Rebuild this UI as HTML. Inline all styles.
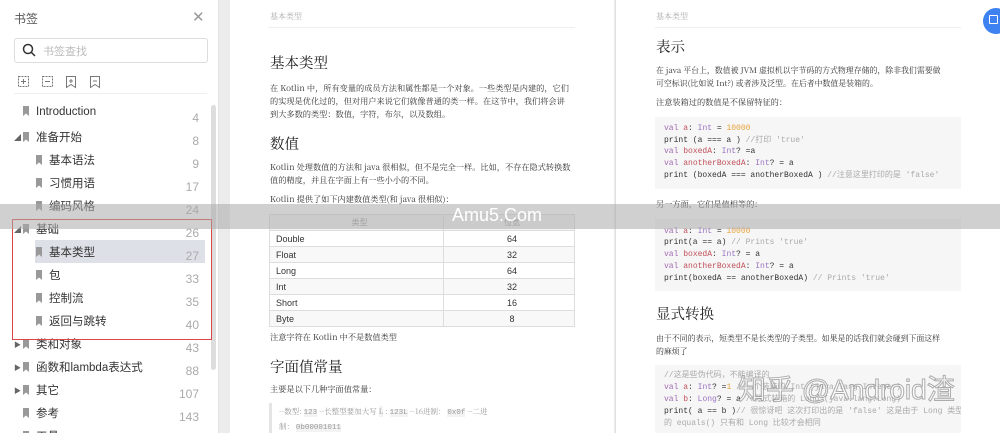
<!DOCTYPE html>
<html style="overflow:hidden"><head><meta charset="utf-8"><style>
*{margin:0;padding:0;box-sizing:border-box}
body{width:1000px;height:433px;overflow:hidden;position:relative;background:#ececec;font-family:"Liberation Sans","Noto Sans CJK SC",sans-serif;color:#333}
.a{position:absolute;white-space:nowrap}
#side{position:absolute;left:0;top:0;width:219px;height:433px;background:#fff;border-right:1px solid #e2e2e2;overflow:hidden}
.it{position:absolute;font-size:11.5px;color:#333}
.num{position:absolute;right:19px;font-size:12px;color:#aaa}
.bm{display:inline-block;width:6px;height:10px;background:#999;margin-right:7px;vertical-align:-1px;clip-path:polygon(0 0,100% 0,100% 100%,50% 75%,0 100%)}
.tri{position:absolute;font-size:7px;color:#666}
.pg{position:absolute;top:0;height:433px;background:#fff}
.s{font-family:"Noto Serif CJK SC","Liberation Serif",serif}
.p{font-size:8.2px;color:#333;font-family:"Noto Serif CJK SC","Liberation Serif",serif}
.h{font-size:14.5px;color:#222;font-family:"Noto Serif CJK SC","Liberation Serif",serif}
.code{position:absolute;background:#f6f6f6;font-family:"Liberation Mono",monospace;font-size:8px;color:#333;overflow:hidden}
.code div{position:absolute;left:9px;white-space:nowrap;line-height:10px}
.k{color:#a36ab2}.v{color:#c0505a}.t{color:#9a73c0}.n{color:#e9a23b}.c{color:#aaa}
table{border-collapse:collapse;font-size:9px}
td{border:1px solid #ddd;height:16px;padding-left:6px}
</style></head><body>
<div id="side">
<div class="a" style="left:14px;top:10px;font-size:12px;color:#555">书签</div>
<div class="a" style="left:192px;top:8px;font-size:15px;color:#999">✕</div>
<div class="a" style="left:14px;top:38px;width:194px;height:25px;border:1px solid #ddd;border-radius:3px"></div>
<svg class="a" style="left:22px;top:43px" width="14" height="14"><circle cx="6" cy="6" r="4.5" fill="none" stroke="#333" stroke-width="1.5"/><line x1="9.5" y1="9.5" x2="13" y2="13" stroke="#333" stroke-width="1.5"/></svg>
<div class="a" style="left:43px;top:43px;font-size:11px;color:#bbb">书签查找</div>
<svg class="a" style="left:17px;top:75px" width="90" height="14" fill="none" stroke="#777" stroke-width="1"><rect x="1.5" y="1.5" width="10" height="10" stroke-dasharray="2 1"/><path d="M6.5 4v5M4 6.5h5"/><rect x="25.5" y="1.5" width="10" height="10" stroke-dasharray="2 1"/><path d="M28 6.5h5"/><path d="M49.5 1.5h9v11l-4.5-3-4.5 3z M54 4v4M52 6h4"/><path d="M73.5 1.5h9v11l-4.5-3-4.5 3z M76 6h4"/></svg>
<div class="a" style="left:14px;top:93px;width:193px;height:1px;background:#eee"></div>
<div class="a" style="left:211px;top:105px;width:5px;height:265px;background:#ddd;border-radius:3px"></div>
<div class="a" style="left:35px;top:240px;width:170px;height:23px;background:#dde0e6"></div>
<div class="it" style="left:23px;top:106px"><span class="bm"></span>Introduction</div><div class="num" style="top:111px">4</div>
<div class="tri" style="left:14px;top:133px">◢</div><div class="it" style="left:23px;top:129px"><span class="bm"></span>准备开始</div><div class="num" style="top:134px">8</div>
<div class="it" style="left:36px;top:152px"><span class="bm"></span>基本语法</div><div class="num" style="top:157px">9</div>
<div class="it" style="left:36px;top:175px"><span class="bm"></span>习惯用语</div><div class="num" style="top:180px">17</div>
<div class="it" style="left:36px;top:198px"><span class="bm"></span>编码风格</div><div class="num" style="top:203px">24</div>
<div class="tri" style="left:14px;top:225px">◢</div><div class="it" style="left:23px;top:221px"><span class="bm"></span>基础</div><div class="num" style="top:226px">26</div>
<div class="it" style="left:36px;top:244px"><span class="bm"></span>基本类型</div><div class="num" style="top:249px">27</div>
<div class="it" style="left:36px;top:267px"><span class="bm"></span>包</div><div class="num" style="top:272px">33</div>
<div class="it" style="left:36px;top:290px"><span class="bm"></span>控制流</div><div class="num" style="top:295px">35</div>
<div class="it" style="left:36px;top:313px"><span class="bm"></span>返回与跳转</div><div class="num" style="top:318px">40</div>
<div class="tri" style="left:14px;top:340px">▶</div><div class="it" style="left:23px;top:336px"><span class="bm"></span>类和对象</div><div class="num" style="top:341px">43</div>
<div class="tri" style="left:14px;top:363px">▶</div><div class="it" style="left:23px;top:359px"><span class="bm"></span>函数和lambda表达式</div><div class="num" style="top:364px">88</div>
<div class="tri" style="left:14px;top:386px">▶</div><div class="it" style="left:23px;top:382px"><span class="bm"></span>其它</div><div class="num" style="top:387px">107</div>
<div class="it" style="left:23px;top:405px"><span class="bm"></span>参考</div><div class="num" style="top:410px">143</div>
<div class="it" style="left:23px;top:428px"><span class="bm"></span>工具</div>
<div class="a" style="left:12px;top:219px;width:200px;height:121px;border:1.5px solid #d44"></div>
</div>

<div class="pg" style="left:230px;width:384px"></div>
<div class="a s" style="left:270px;top:11px;font-size:8px;color:#aaa">基本类型</div>
<div class="a" style="left:268px;top:27px;width:307px;height:1px;background:#eee"></div>
<div class="a h" style="left:270px;top:52px">基本类型</div>
<div class="a p" style="left:270px;top:82px;line-height:13px">在 Kotlin 中，所有变量的成员方法和属性都是一个对象。一些类型是内建的，它们<br>的实现是优化过的，但对用户来说它们就像普通的类一样。在这节中，我们将会讲<br>到大多数的类型：数值，字符，布尔，以及数组。</div>
<div class="a h" style="left:270px;top:133px">数值</div>
<div class="a p" style="left:270px;top:161px;line-height:13px">Kotlin 处理数值的方法和 java 很相似，但不是完全一样。比如，不存在隐式转换数<br>值的精度，并且在字面上有一些小小的不同。</div>
<div class="a p" style="left:270px;top:194px">Kotlin 提供了如下内建数值类型(和 java 很相似)：</div>
<table class="a" style="left:269px;top:214px;width:306px">
<tr style="background:#f3f3f3"><td style="width:174px;text-align:center;color:#999;font-size:8px">类型</td><td style="text-align:center;color:#999;font-size:8px">位宽</td></tr>
<tr><td>Double</td><td style="text-align:center">64</td></tr>
<tr style="background:#f8f8f8"><td>Float</td><td style="text-align:center">32</td></tr>
<tr><td>Long</td><td style="text-align:center">64</td></tr>
<tr style="background:#f8f8f8"><td>Int</td><td style="text-align:center">32</td></tr>
<tr><td>Short</td><td style="text-align:center">16</td></tr>
<tr style="background:#f8f8f8"><td>Byte</td><td style="text-align:center">8</td></tr>
</table>
<div class="a p" style="left:270px;top:332px">注意字符在 Kotlin 中不是数值类型</div>
<div class="a h" style="left:270px;top:356px">字面值常量</div>
<div class="a p" style="left:270px;top:384px">主要是以下几种字面值常量：</div>
<div class="a" style="left:269px;top:403px;width:306px;height:30px;border-left:3px solid #e5e5e5"></div>
<div class="a p" style="left:279px;top:405px;color:#999;font-size:7.5px;line-height:13px">--数型: <span style="background:#f3f3f3;font-family:'Liberation Mono'">123</span> --长整型要加大写 <span style="background:#f3f3f3">L</span> : <span style="background:#f3f3f3;font-family:'Liberation Mono'">123L</span> --16进制： <span style="background:#f3f3f3;font-family:'Liberation Mono'">0x0f</span> --二进<br>制： <span style="background:#f3f3f3;font-family:'Liberation Mono'">0b00001011</span></div>

<div class="pg" style="left:615px;width:385px;border-left:1px solid #e0e0e0"></div>
<div class="a s" style="left:656px;top:11px;font-size:8px;color:#aaa">基本类型</div>
<div class="a" style="left:655px;top:27px;width:306px;height:1px;background:#eee"></div>
<div class="a h" style="left:656px;top:36px">表示</div>
<div class="a p" style="left:656px;top:64px;line-height:13px;font-size:7.9px">在 java 平台上，数值被 JVM 虚拟机以字节码的方式物理存储的，除非我们需要做<br>可空标识(比如说 Int?) 或者涉及泛型。在后者中数值是装箱的。</div>
<div class="a p" style="left:656px;top:97px">注意装箱过的数值是不保留特征的：</div>
<div class="code" style="left:655px;top:117px;width:306px;height:72px">
<div style="top:7px"><span class="k">val</span> <span class="v">a</span>: <span class="t">Int</span> = <span class="n">10000</span></div>
<div style="top:19px">print (a === a ) <span class="c">//打印 'true'</span></div>
<div style="top:30px"><span class="k">val</span> <span class="v">boxedA</span>: <span class="t">Int</span>? =a</div>
<div style="top:42px"><span class="k">val</span> <span class="v">anotherBoxedA</span>: <span class="t">Int</span>? = a</div>
<div style="top:54px">print (boxedA === anotherBoxedA ) <span class="c">//注意这里打印的是 'false'</span></div>
</div>
<div class="a p" style="left:656px;top:199px">另一方面，它们是值相等的：</div>
<div class="code" style="left:655px;top:219px;width:306px;height:72px">
<div style="top:8px"><span class="k">val</span> <span class="v">a</span>: <span class="t">Int</span> = <span class="n">10000</span></div>
<div style="top:19px">print(a == a) <span class="c">// Prints 'true'</span></div>
<div style="top:31px"><span class="k">val</span> <span class="v">boxedA</span>: <span class="t">Int</span>? = a</div>
<div style="top:43px"><span class="k">val</span> <span class="v">anotherBoxedA</span>: <span class="t">Int</span>? = a</div>
<div style="top:55px">print(boxedA == anotherBoxedA) <span class="c">// Prints 'true'</span></div>
</div>
<div class="a h" style="left:656px;top:303px">显式转换</div>
<div class="a p" style="left:656px;top:332px;line-height:13px;font-size:7.9px">由于不同的表示，短类型不是长类型的子类型。如果是的话我们就会碰到下面这样<br>的麻烦了</div>
<div class="code" style="left:655px;top:365px;width:306px;height:68px">
<div style="top:6px" class="c">//这是些伪代码，不能编译的</div>
<div style="top:18px"><span class="k">val</span> <span class="v">a</span>: <span class="t">Int</span>? =<span class="n">1</span> <span class="c">//一个装箱的 Int (java.lang.Integer)</span></div>
<div style="top:30px"><span class="k">val</span> <span class="v">b</span>: <span class="t">Long</span>? = a <span class="c">//隐式装箱的 Long (java.lang.Long)</span></div>
<div style="top:42px">print( a == b )<span class="c">// 很惊讶吧 这次打印出的是 'false' 这是由于 Long 类型</span></div>
<div style="top:54px" class="c">的 equals() 只有和 Long 比较才会相同</div>
</div>
<div class="a" style="left:738px;top:368px;font-size:28px;color:rgba(255,255,255,.75);-webkit-text-stroke:1px rgba(120,120,120,.6)">知乎 @Android渣</div>
<div class="a" style="left:983px;top:8px;width:26px;height:26px;border-radius:50%;background:#3d82f0"></div>
<div class="a" style="left:989px;top:15px;width:9px;height:9px;border:1.5px solid #fff;border-radius:1px"></div>

<div class="a" style="left:0;top:204px;width:1000px;height:25px;background:rgba(170,170,170,.55)"></div>
<div class="a" style="left:452px;top:205px;font-size:18px;color:#fff">Amu5.Com</div>
</body></html>
